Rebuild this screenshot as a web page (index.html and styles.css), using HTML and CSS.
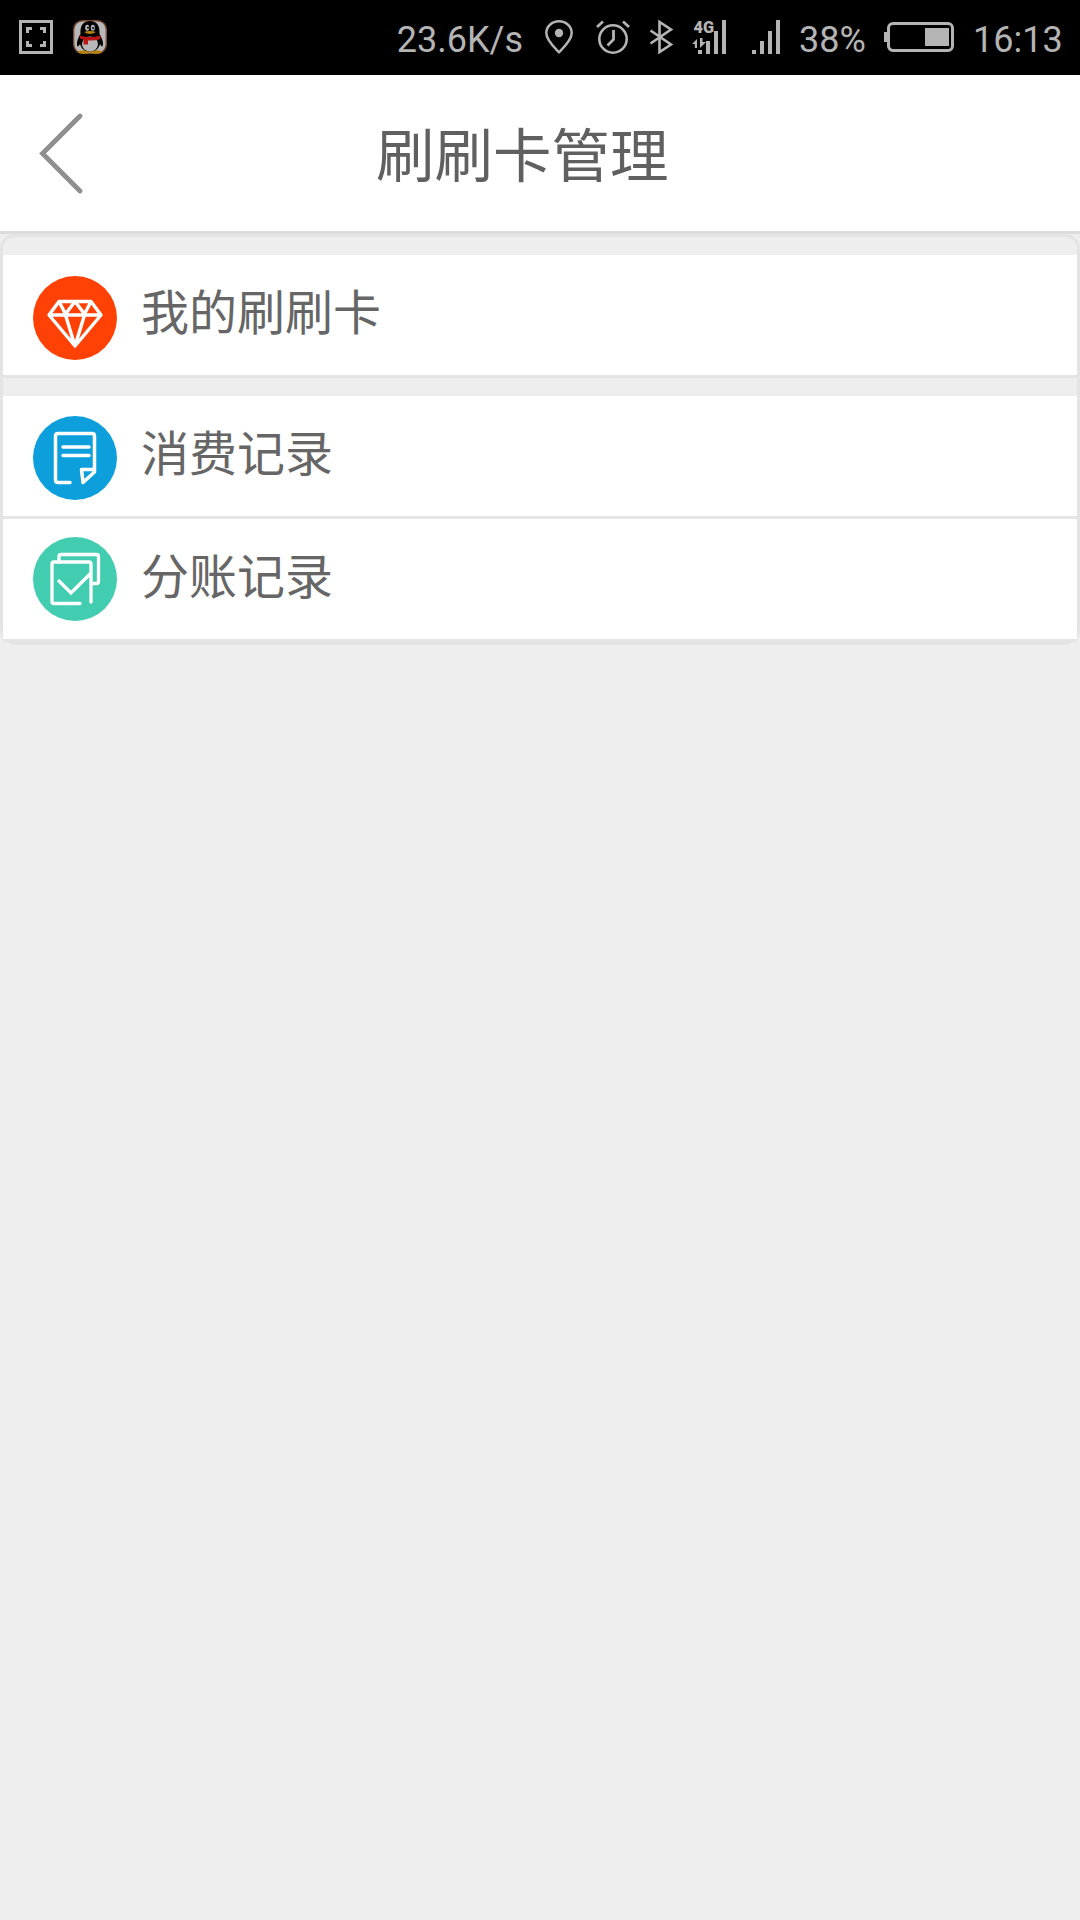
FILE: index.html
```html
<!DOCTYPE html>
<html lang="zh-CN">
<head>
    <meta charset="UTF-8">
    <meta name="viewport" content="width=device-width, initial-scale=1.0">
    <title>刷刷卡管理</title>
    <link rel="stylesheet" href="styles.css">
</head>
<body>
    <div class="status-bar">
        <div class="status-left">
            <svg class="icon-capture" width="34" height="34" viewBox="0 0 34 34">
                <path d="M1.5 1.5h31v31h-31z" fill="none" stroke="#b4b4b4" stroke-width="3"/>
                <path d="M8.500 13v-4.500h4.500M21 8.500h4.500v4.500M8.500 21v4.500h4.500M25.500 21v4.500h-4.500" fill="none" stroke="#b4b4b4" stroke-width="3"/>
            </svg>
            <svg class="icon-qq" width="34" height="34" viewBox="0 0 34 34">
                <rect x="0.700" y="0.700" width="32.600" height="32.600" rx="9" fill="#b8b8b8" stroke="#7c4b35" stroke-width="1.400"/>
                <ellipse cx="11" cy="32" rx="6" ry="1.800" fill="#b5820e"/>
                <ellipse cx="23" cy="32" rx="6" ry="1.800" fill="#b5820e"/>
                <path d="M17 1C10 1 7 6 7.500 14C5 18 3 23 4.500 26.500C5.500 26.500 6.500 25 7 24C8 28 11 31.500 17 31.500S26 28 27 24C27.500 25 28.500 26.500 29.500 26.500C31 23 29 18 26.500 14C27 6 24 1 17 1z" fill="#000"/>
                <ellipse cx="17" cy="24" rx="8" ry="7.500" fill="#b8b8b8"/>
                <path d="M6.500 15.500Q17 18.500 27.500 15.500V19Q22 21 15 20.500V24.500H10.500V19.800L7 18.500z" fill="#b81616"/>
                <ellipse cx="14.200" cy="7.800" rx="2" ry="3" fill="#b8b8b8"/>
                <ellipse cx="19.800" cy="7.800" rx="2" ry="3" fill="#b8b8b8"/>
                <circle cx="15" cy="7.800" r="1" fill="#000"/>
                <circle cx="20" cy="8" r="1" fill="#000"/>
                <path d="M11 12Q17 10 23 12Q17 16 11 12z" fill="#b5820e"/>
            </svg>
        </div>
        <div class="status-right">
            <span class="speed">23.6K/s</span>
            <svg class="icon-pin" width="28" height="34" viewBox="0 0 28 34">
                <path d="M14 32.200C10 28 1.300 20.500 1.300 13A12.700 11.700 0 0 1 26.700 13C26.700 20.500 18 28 14 32.200z" fill="none" stroke="#b4b4b4" stroke-width="2.500"/>
                <circle cx="14" cy="13" r="4.200" fill="#b4b4b4"/>
            </svg>
            <svg class="icon-alarm" width="34" height="34" viewBox="0 0 34 34" fill="none" stroke="#b4b4b4">
                <circle cx="17" cy="19" r="13.700" stroke-width="2.600"/>
                <path d="M17.500 10v9.500l-6 6" stroke-width="2.800"/>
                <path d="M1 7l6-5.500M33 7l-6-5.500" stroke-width="2.700"/>
            </svg>
            <svg class="icon-bluetooth" width="24" height="34" viewBox="0 0 24 34">
                <path d="M1.500 10.500L22 24.500L10.500 32V2L22 9.500L1.500 23.500" fill="none" stroke="#b4b4b4" stroke-width="2.600"/>
            </svg>
            <svg class="icon-4g" width="34" height="34" viewBox="0 0 34 34" fill="#b4b4b4">
                <text class="network" x="1.500" y="12.500" textLength="20.500" lengthAdjust="spacingAndGlyphs">4G</text>
                <path d="M6 30h4v4H6zM14 21h4v13h-4zM22 11h4v23h-4zM30 0h4v34h-4z"/>
                <path d="M0 24l5-5v9H2.800v-4zM8 18h2.500v4h3.500l-6 6z"/>
            </svg>
            <svg class="icon-signal" width="28" height="34" viewBox="0 0 28 34" fill="#b4b4b4">
                <path d="M0 30h4v4H0zM8 21h4v13H8zM16 11h4v23h-4zM24 0h4v34h-4z"/>
            </svg>
            <span class="percent">38%</span>
            <svg class="icon-battery" width="70" height="30" viewBox="0 0 70 30">
                <rect x="4.500" y="1.500" width="64" height="27" rx="4.500" fill="none" stroke="#b4b4b4" stroke-width="3"/>
                <path d="M0 10h4v10H0zM41 6h24v18H41z" fill="#b4b4b4"/>
            </svg>
            <span class="time">16:13</span>
        </div>
    </div>

    <header class="header">
        <a class="back" href="#">
            <svg width="44" height="82" viewBox="0 0 44 82">
                <path d="M41 3L3.500 40.500L41 78" fill="none" stroke="#8f8f8f" stroke-width="4.800" stroke-linecap="round"/>
            </svg>
        </a>
        <h1 class="title">刷刷卡管理</h1>
    </header>

    <div class="menu">
        <a class="item first" href="#">
            <svg class="item-icon" width="84" height="84" viewBox="0 0 84 84">
                <circle cx="42" cy="42" r="42" fill="#ff4106"/>
                <path d="M26 25.500H58L68 39L42 70L16 39zM16 39H68M26 25.500L32.500 38L42 25.500L51.500 38L58 25.500M32.500 39L42 70L51.500 39" fill="none" stroke="#fff" stroke-width="3.400" stroke-linejoin="round"/>
            </svg>
            <span class="item-text">我的刷刷卡</span>
        </a>
        <a class="item second" href="#">
            <svg class="item-icon" width="84" height="84" viewBox="0 0 84 84">
                <circle cx="42" cy="42" r="42" fill="#0c9fdc"/>
                <path d="M37 66.500H25Q22.500 66.500 22.500 64V20Q22.500 17.500 25 17.500H59Q61.500 17.500 61.500 20V56L50 66.500L48.500 53.500H61M30 31H56M30 39.500H56" fill="none" stroke="#fff" stroke-width="3.500" stroke-linecap="round" stroke-linejoin="round"/>
            </svg>
            <span class="item-text">消费记录</span>
        </a>
        <a class="item third" href="#">
            <svg class="item-icon" width="84" height="84" viewBox="0 0 84 84">
                <circle cx="42" cy="42" r="42" fill="#42cdb1"/>
                <path d="M47 66.500H21Q19 66.500 19 64.500V27Q19 25 21 25H56Q58 25 58 27V65M26 24V19.500Q26 17.500 28 17.500H63.500Q65.500 17.500 65.500 19.500V44.500Q65.500 46.500 63.500 46.500H59M26 44L38 56L57 37" fill="none" stroke="#fff" stroke-width="3.300" stroke-linecap="round"/>
            </svg>
            <span class="item-text">分账记录</span>
        </a>
    </div>
</body>
</html>
```

FILE: styles.css
```css
* {
    box-sizing: border-box;
}
body {
    margin: 0;
    min-height: 100vh;
    background-color: #eee;
    color: #666;
    font-family: "Noto Sans CJK SC", sans-serif;
}
a {
    color: inherit;
    text-decoration: none;
}

/* system status bar */
.status-bar {
    display: flex;
    justify-content: space-between;
    height: 75px;
    padding: 20px 17px 0 19px;
    background: #000;
    color: #b4b4b4;
    font-family: Roboto, sans-serif;
    font-size: 36px;
    line-height: 40px;
}
.status-left,
.status-right {
    display: flex;
    align-items: flex-start;
}
.status-bar svg {
    flex: none;
    overflow: visible;
}
.icon-qq {
    margin-left: 20px;
}
.icon-pin {
    margin-left: 22px;
}
.icon-alarm {
    margin-left: 23px;
}
.icon-bluetooth {
    margin-left: 19px;
}
.icon-4g {
    margin-left: 19px;
}
.network {
    font-size: 17px;
    font-weight: 900;
}
.icon-signal {
    margin-left: 26px;
}
.percent {
    width: 66px;
    margin-left: 19px;
}
.icon-battery {
    margin: 2px 0 0 19px;
}
.time {
    width: 90px;
    margin-left: 19px;
}

/* page header */
.header {
    display: flex;
    align-items: center;
    height: 159px;
    border-bottom: 3px solid #dcdcdc;
    background: #fff;
}
.back {
    height: 82px;
    margin: 2px 0 0 39px;
}
.title {
    margin: 0 0 2px 293px;
    color: #606060;
    font-size: 58.500px;
    font-weight: normal;
    line-height: 84px;
}

/* menu list */
.menu {
    padding-top: 18px;
    border: 3px solid #e4e4e4;
    border-radius: 15px;
}
.item {
    display: flex;
    align-items: flex-start;
    height: 123px;
    padding-left: 30px;
    border-bottom: 3px solid #e4e4e4;
    background: #fff;
}
.item-icon {
    flex: none;
    margin-top: 20px;
}
.item-text {
    margin: 19px 0 0 24px;
    font-size: 48px;
    line-height: 70px;
}
.first .item-icon {
    margin-top: 21px;
}
.second {
    margin-top: 18px;
}
.third .item-icon {
    margin-top: 18px;
}
```
